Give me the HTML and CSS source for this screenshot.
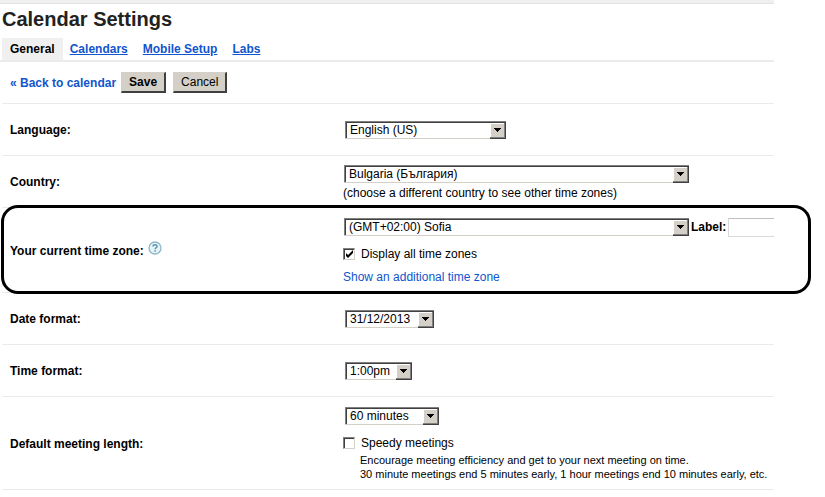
FILE: index.html
```html
<!DOCTYPE html>
<html lang="en">
<head>
  <meta charset="UTF-8">
  <title>Calendar Settings</title>
  <link rel="stylesheet" href="styles.css">
</head>
<body>

  <div class="page">
    <div class="top-bar"></div>
    <h1>Calendar Settings</h1>

    <nav class="tabs">
      <span class="tab tab-active">General</span>
      <a class="tab" href="#calendars">Calendars</a>
      <a class="tab" href="#mobile">Mobile Setup</a>
      <a class="tab" href="#labs">Labs</a>
    </nav>

    <form class="settings">
      <div class="actions">
        <a class="back" href="#calendar">&laquo; Back to calendar</a>
        <button type="submit" class="button button-save">Save</button>
        <button type="button" class="button">Cancel</button>
      </div>

      <div class="row">
        <label class="name" for="language">Language:</label>
        <div class="value">
          <select id="language" class="select select-language"><option>English (US)</option></select>
        </div>
      </div>

      <div class="row">
        <label class="name" for="country">Country:</label>
        <div class="value value-wide">
          <select id="country" class="select select-long"><option>Bulgaria (България)</option></select>
          <div class="note">(choose a different country to see other time zones)</div>
        </div>
      </div>

      <!-- Time zone, circled -->
      <div class="row row-zone">
        <div class="name name-zone">
          <label for="timezone">Your current time zone:</label>
          <a class="help" href="#help" aria-label="Help">
            <svg width="14" height="14" viewBox="0 0 14 14">
              <circle cx="7" cy="7" r="6" fill="#e6f4f8" stroke="#8fb8c4" stroke-width="1.3"/>
              <path d="M5 5.6C5 3.3 9 3.3 9 5.4C9 6.8 7.1 6.7 7.1 8.3M7.1 9.3V10.7" fill="none" stroke="#5c92b8" stroke-width="1.5"/>
            </svg>
          </a>
        </div>
        <div class="value value-wide">
          <div class="zone-line">
            <select id="timezone" class="select select-long"><option>(GMT+02:00) Sofia</option></select>
            <label class="zone-label" for="zone-name">Label:</label>
            <input id="zone-name" class="zone-input" type="text">
          </div>
          <div class="check-line">
            <input id="all-zones" class="check" type="checkbox" checked>
            <label for="all-zones">Display all time zones</label>
          </div>
          <a class="more" href="#zones">Show an additional time zone</a>
        </div>
      </div>

      <div class="row">
        <label class="name" for="date">Date format:</label>
        <div class="value">
          <select id="date" class="select select-date"><option>31/12/2013</option></select>
        </div>
      </div>

      <div class="row">
        <label class="name" for="time">Time format:</label>
        <div class="value">
          <select id="time" class="select select-time"><option>1:00pm</option></select>
        </div>
      </div>

      <div class="row row-meeting">
        <label class="name" for="length">Default meeting length:</label>
        <div class="value">
          <select id="length" class="select select-length"><option>60 minutes</option></select>
          <div class="check-line">
            <input id="speedy" class="check" type="checkbox">
            <label for="speedy">Speedy meetings</label>
          </div>
          <div class="hint">
            Encourage meeting efficiency and get to your next meeting on time.<br>
            30 minute meetings end 5 minutes early, 1 hour meetings end 10 minutes early, etc.
          </div>
        </div>
      </div>
    </form>
  </div>

</body>
</html>
```
FILE: styles.css
```css
* {
  box-sizing: border-box;
}

body {
  margin: 0;
  background: #fff;
  color: #000;
  font-family: "Liberation Sans", Arial, sans-serif;
  font-size: 12px;
}

.page {
  margin-right: 51px;
}

.top-bar {
  height: 4px;
  background: #f0f0f0;
  border-bottom: 1px solid #e4e4e4;
}

h1 {
  margin: 0;
  padding: 3px 2px 7px;
  font-size: 20px;
  line-height: 24px;
  color: #222;
}

a {
  color: #15c;
}

.tabs {
  display: flex;
  padding-left: 2px;
  border-bottom: 2px solid #ebebeb;
}

.tab {
  padding: 0 8px 0 7px;
  font-weight: bold;
  line-height: 22px;
}

.tab-active {
  padding-left: 8px;
  background: #f0f0f0;
}

.settings {
  margin-left: 2px;
}

.actions {
  display: flex;
  align-items: center;
  height: 42px;
  padding-left: 8px;
  border-bottom: 1px solid #ebebeb;
}

.back {
  margin-right: 5px;
  font-weight: bold;
  text-decoration: none;
}

.button {
  height: 21px;
  margin-right: 7px;
  padding: 0 7px;
  background: #d4d0c8;
  border: 1px solid #d4d0c8;
  border-right: 2px solid #404040;
  border-bottom: 2px solid #404040;
  font-family: inherit;
  font-size: 12px;
  color: #000;
}

.button-save {
  font-weight: bold;
}

.row {
  display: flex;
  align-items: center;
  min-height: 52px;
  padding-left: 8px;
  border-bottom: 1px solid #ebebeb;
}

.name {
  flex: 0 0 333px;
  font-weight: bold;
}

.value {
  flex: 1;
  min-width: 0;
  line-height: 16px;
}

.select {
  appearance: none;
  display: block;
  height: 18px;
  margin: 0 2px;
  padding: 0 18px 0 4px;
  border: 1px solid #808080;
  border-right: 0;
  border-bottom-color: transparent;
  border-radius: 0;
  background-color: #fff;
  background-image:
    url("data:image/svg+xml,%3Csvg xmlns='http://www.w3.org/2000/svg' width='16' height='17' shape-rendering='crispEdges'%3E%3Cpath fill='%23404040' d='M0 0h16v17H0z'/%3E%3Cpath fill='%23808080' d='M0 0h15v16H0z'/%3E%3Cpath fill='%23fff' d='M0 0h14v15H0z'/%3E%3Cpath fill='%23d4d0c8' d='M1 2h13v13H1z'/%3E%3Cpath d='M4 6h7v1H4zM5 7h5v1H5zM6 8h3v1H6zM7 9h1v1H7z'/%3E%3C/svg%3E"),
    linear-gradient(#d4d0c8, #d4d0c8);
  background-repeat: no-repeat;
  background-position: right bottom, left bottom;
  background-size: 16px 17px, 100% 1px;
  background-origin: border-box;
  box-shadow: inset 1px 1px #404040;
  font-family: inherit;
  font-size: 12px;
  line-height: 16px;
  color: #000;
}

.value-wide {
  padding-top: 2px;
}

.value-wide .select {
  margin: 0 1px;
}

.select-language {
  width: 161px;
}

.select-long {
  flex: none;
  width: 345px;
}

.select-date {
  width: 89px;
}

.select-time {
  width: 67px;
}

.select-length {
  width: 94px;
}

.note {
  padding-top: 2px;
}

/* Time zone */
.row-zone {
  position: relative;
  min-height: 85px;
}

.row-zone::after {
  content: "";
  position: absolute;
  top: -3px;
  right: -37px;
  bottom: -2px;
  left: -1px;
  border: 3px solid #000;
  border-radius: 17px;
  pointer-events: none;
}

.name-zone {
  display: flex;
  align-items: center;
  padding-top: 2px;
}

.help {
  margin-left: 4px;
  padding-bottom: 6px;
}

.help svg {
  display: block;
}

.zone-line {
  display: flex;
  align-items: center;
  overflow: hidden;
}

.zone-label {
  margin: 0 2px 0 1px;
  font-weight: bold;
}

.zone-input {
  flex: none;
  width: 120px;
  height: 19px;
  border: 1px solid #d9d9d9;
  border-top-color: #c0c0c0;
}

.check-line {
  display: flex;
  align-items: center;
  gap: 6px;
  padding: 9px 0 7px;
}

.check {
  appearance: none;
  width: 12px;
  height: 12px;
  margin: 0;
  border: 1px solid #808080;
  border-right-color: #d4d0c8;
  border-bottom-color: #d4d0c8;
  box-shadow: inset 1px 1px #404040;
}

.check:checked {
  background: url("data:image/svg+xml,%3Csvg xmlns='http://www.w3.org/2000/svg' width='10' height='10'%3E%3Cpath d='M2 4v3l2 2 5-5V1L4 6z'/%3E%3C/svg%3E") no-repeat;
}

.more {
  display: block;
  text-decoration: none;
}

/* Meeting length */
.row-meeting {
  min-height: 93px;
  padding-top: 1px;
}

.row-meeting .check-line {
  padding: 10px 0 2px;
}

.hint {
  padding-left: 17px;
  font-size: 11px;
  line-height: 14px;
}
```
